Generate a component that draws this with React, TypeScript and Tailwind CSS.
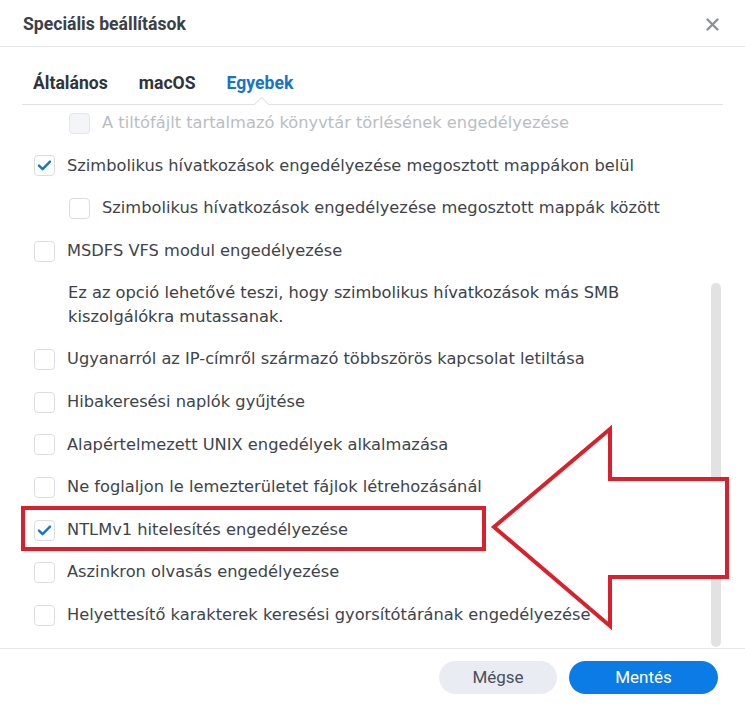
import React from "react";

const bodyFont = { fontFamily: '"DejaVu Sans", Verdana, sans-serif' };

type Row =
  | { kind: "check"; label: string; checked?: boolean; disabled?: boolean; indent?: boolean }
  | { kind: "note"; lines: string[] };

const rows: Row[] = [
  { kind: "check", label: "A tiltófájlt tartalmazó könyvtár törlésének engedélyezése", disabled: true, indent: true },
  { kind: "check", label: "Szimbolikus hívatkozások engedélyezése megosztott mappákon belül", checked: true },
  { kind: "check", label: "Szimbolikus hívatkozások engedélyezése megosztott mappák között", indent: true },
  { kind: "check", label: "MSDFS VFS modul engedélyezése" },
  {
    kind: "note",
    lines: [
      "Ez az opció lehetővé teszi, hogy szimbolikus hívatkozások más SMB",
      "kiszolgálókra mutassanak.",
    ],
  },
  { kind: "check", label: "Ugyanarról az IP-címről származó többszörös kapcsolat letiltása" },
  { kind: "check", label: "Hibakeresési naplók gyűjtése" },
  { kind: "check", label: "Alapértelmezett UNIX engedélyek alkalmazása" },
  { kind: "check", label: "Ne foglaljon le lemezterületet fájlok létrehozásánál" },
  { kind: "check", label: "NTLMv1 hitelesítés engedélyezése", checked: true },
  { kind: "check", label: "Aszinkron olvasás engedélyezése" },
  { kind: "check", label: "Helyettesítő karakterek keresési gyorsítótárának engedélyezése" },
];

function Box({ checked, disabled }: { checked?: boolean; disabled?: boolean }) {
  return (
    <span
      className={
        "flex h-[21px] w-[21px] shrink-0 items-center justify-center rounded-[4px] border " +
        (disabled ? "border-[#e3e6ea] bg-[#f3f5f8]" : "border-[#dadee3] bg-white")
      }
    >
      {checked && (
        <svg width="15" height="15" viewBox="0 0 15 15" fill="none">
          <path d="M2 7.6l3.6 3.6L13 3.6" stroke="#1a73c9" strokeWidth="2.4" strokeLinecap="round" strokeLinejoin="round" />
        </svg>
      )}
    </span>
  );
}

export default function App() {
  return (
    <div
      className="relative flex h-[706px] w-[745px] flex-col overflow-hidden bg-white"
      style={{ fontFamily: 'Roboto, "Noto Sans", sans-serif' }}
    >
      {/* header */}
      <div className="flex h-[47px] shrink-0 items-center justify-between border-b border-[#e4e7ea] pl-[23px] pr-[26px] pt-[3px]">
        <span className="text-[17.6px] font-bold text-[#3b4046]">Speciális beállítások</span>
        <svg width="13" height="13" viewBox="0 0 13 13">
          <path d="M1.5 1.5l10 10M11.5 1.5l-10 10" stroke="#8b9095" strokeWidth="2.3" strokeLinecap="round" />
        </svg>
      </div>

      {/* tabs */}
      <div className="relative mx-[22px] flex h-[58px] shrink-0 items-center gap-[31px] border-b border-[#dfe2e6] pl-[11px] pt-[15px] text-[17.6px] font-bold">
        <span className="text-[#2f3439]">Általános</span>
        <span className="text-[#2f3439]">macOS</span>
        <span className="text-[#1a73c9]">Egyebek</span>
        <span className="absolute bottom-[-6px] left-[234px] h-[11px] w-[11px] rotate-45 border-l border-t border-[#dfe2e6] bg-white" />
      </div>

      {/* scrolling list */}
      <div className="flex min-h-0 flex-1">
        <div className="min-w-0 flex-1 overflow-hidden">
          <div className="-mt-[3px] pl-[34px] text-[16.25px] text-[#3e444a]" style={bodyFont}>
            {rows.map((r, i) =>
              r.kind === "note" ? (
                <div key={i} className="flex h-[66px] flex-col justify-center pl-[34px] leading-[24px] text-[#3b4147]">
                  {r.lines.map((l) => (
                    <span key={l}>{l}</span>
                  ))}
                </div>
              ) : (
                <div
                  key={i}
                  className={"flex h-[42.6px] items-center gap-[12px] whitespace-nowrap " + (r.indent ? "pl-[35px]" : "")}
                >
                  <Box checked={r.checked} disabled={r.disabled} />
                  <span className={r.disabled ? "text-[#b9bdc2]" : ""}>{r.label}</span>
                </div>
              )
            )}
          </div>
        </div>
        <div className="mr-[24px] flex w-[10px] shrink-0 flex-col">
          <div className="mt-auto mb-[1px] h-[364px] rounded-full bg-[#e2e2e2]" />
        </div>
      </div>

      {/* footer */}
      <div className="flex h-[58px] shrink-0 items-center justify-end gap-[12px] border-t border-[#e4e7ea] pr-[27px] text-[17px]">
        <button className="h-[33px] w-[118px] rounded-full bg-[#e9edf3] text-[#4a5057]">Mégse</button>
        <button className="h-[33px] w-[149px] rounded-full bg-[#0b7be6] text-white">Mentés</button>
      </div>

      {/* annotation */}
      <div className="pointer-events-none absolute left-[21px] top-[506px] h-[45px] w-[465px] border-[4px] border-[#d7222d]" />
      <svg className="pointer-events-none absolute left-0 top-0" width="745" height="706">
        <polygon
          points="494,527 610,429 610,479 727,479 727,577 610,577 610,626"
          fill="white"
          stroke="#d7222d"
          strokeWidth="4"
          strokeLinejoin="miter"
        />
      </svg>
    </div>
  );
}
